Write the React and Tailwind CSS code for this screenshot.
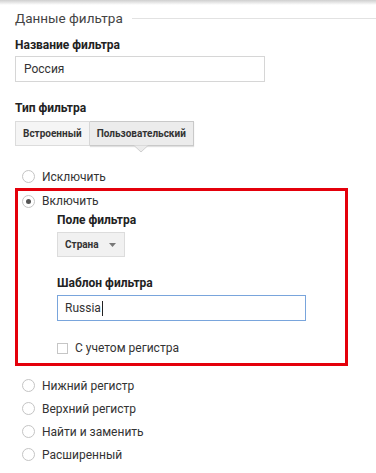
import React from "react";

const Radio = ({ checked }) => (
  <span className="flex h-[13px] w-[13px] shrink-0 items-center justify-center rounded-full border border-[#c4c4c4] bg-white">
    {checked && <span className="h-[5px] w-[5px] rounded-full bg-[#555]" />}
  </span>
);

const RadioRow = ({ label, checked }) => (
  <div className="flex h-[23px] items-center gap-[7px]">
    <Radio checked={checked} />
    <span className="text-[12px] text-[#333]">{label}</span>
  </div>
);

const Label = ({ children, className = "" }) => (
  <div className={"text-[12px] font-bold leading-[16px] text-[#222] " + className}>
    {children}
  </div>
);

export default function App() {
  return (
    <div className="relative h-[473px] w-[376px] overflow-hidden bg-white font-['Roboto',_'Liberation_Sans',_sans-serif] text-[#333]">
      <div className="absolute left-0 right-0 top-0 h-[5px] bg-gradient-to-b from-[#cfcfcf] to-white" />

      <div className="pl-[15px] pt-[8px]">
        <div className="flex h-[20px] items-center">
          <span className="text-[13.5px] text-[#444]">Данные фильтра</span>
          <span className="ml-[9px] h-px flex-1 bg-[#e2e2e2]" />
        </div>

        <Label className="mt-[9px]">Название фильтра</Label>
        <div className="mt-[3px] flex h-[26px] w-[250px] items-center border border-[#d6d6d6] pl-[8px] text-[12px] text-[#333]">
          Россия
        </div>

        <Label className="mt-[18px]">Тип фильтра</Label>
        <div className="relative mt-[5px] flex h-[25px] w-fit">
          <div className="flex items-center border border-[#dcdcdc] bg-[#f5f5f5] px-[7px] text-[10px] font-bold text-[#333]">
            Встроенный
          </div>
          <div className="flex items-center border border-l-0 border-[#c9c9c9] bg-[#ececec] px-[7px] text-[10px] font-bold text-[#333] shadow-[0_1px_1px_rgba(0,0,0,0.12)]">
            Пользовательский
          </div>
          <svg
            className="absolute left-[119px] top-[24px]"
            width="14"
            height="8"
            viewBox="0 0 14 8"
          >
            <path d="M0 0.5 L7 7 L14 0.5" fill="#ececec" stroke="#cfcfcf" strokeWidth="1" />
          </svg>
        </div>

        <div className="mt-[19px] w-[333px]">
          <div className="pl-[7px]">
            <RadioRow label="Исключить" />
          </div>

          <div className="border-[3px] border-[#e4000b] pb-[7px] pl-[4px]">
            <div className="flex h-[20px] items-center gap-[7px]">
              <Radio checked />
              <span className="text-[12px] text-[#333]">Включить</span>
            </div>

            <div className="pl-[35px]">
              <Label className="mt-[1px]">Поле фильтра</Label>
              <div className="mt-[4px] flex h-[25px] w-[68px] items-center justify-between border border-[#dcdcdc] bg-[#f1f1f1] pl-[7px] pr-[8px]">
                <span className="text-[10px] font-bold text-[#333]">Страна</span>
                <svg width="7" height="4" viewBox="0 0 7 4">
                  <path d="M0 0 L7 0 L3.5 4 Z" fill="#777" />
                </svg>
              </div>

              <Label className="mt-[18px]">Шаблон фильтра</Label>
              <div className="mt-[4px] flex h-[26px] w-[249px] items-center border border-[#79a5dc] pl-[7px] text-[12px] text-[#333]">
                Russia
                <span className="ml-px h-[15px] w-px bg-[#222]" />
              </div>

              <div className="mt-[19px] flex h-[16px] items-center gap-[7px]">
                <span className="h-[11px] w-[11px] border border-[#c6c6c6] bg-white" />
                <span className="text-[12px] text-[#333]">С учетом регистра</span>
              </div>
            </div>
          </div>

          <div className="mt-[8px] pl-[7px]">
            <RadioRow label="Нижний регистр" />
            <RadioRow label="Верхний регистр" />
            <RadioRow label="Найти и заменить" />
            <RadioRow label="Расширенный" />
          </div>
        </div>
      </div>
    </div>
  );
}
